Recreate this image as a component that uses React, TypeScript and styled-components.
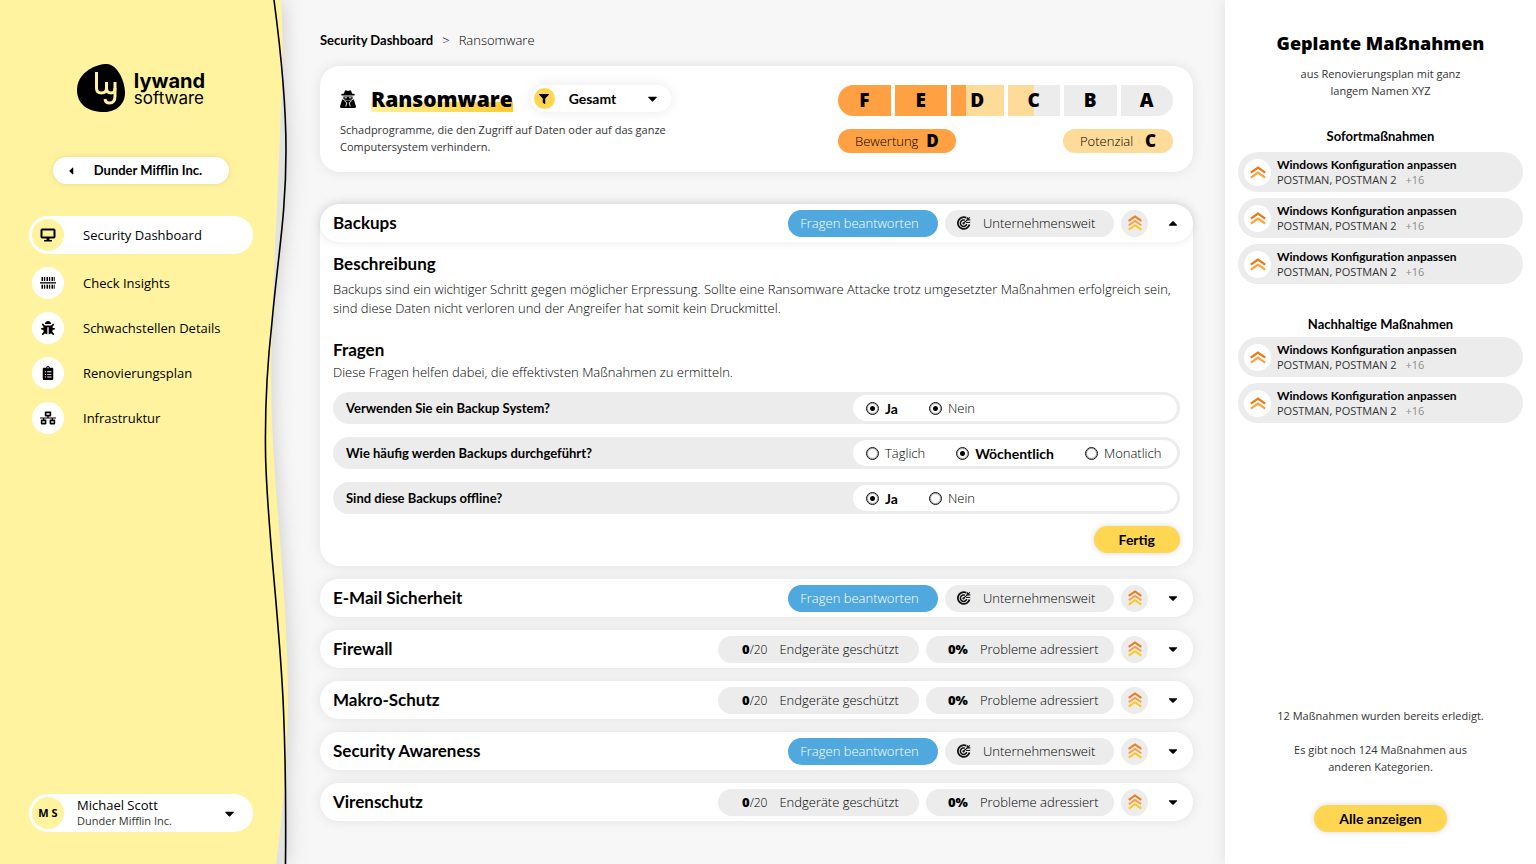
import React, { useId, useState } from 'react';
import styled, { createGlobalStyle, css } from 'styled-components';
import {
  FaBug,
  FaCaretDown,
  FaCaretLeft,
  FaCaretUp,
  FaClipboardList,
  FaFilter,
  FaNetworkWired,
} from 'react-icons/fa';

const color = {
  sidebar: '#fff3a0',
  yellow: '#ffd651',
  page: '#f7f7f7',
  grey: '#ececec',
  blue: '#4fa8de',
  orange: '#ffa143',
  peach: '#ffdb99',
  text: '#000',
  soft: '#333',
  muted: '#8c8c8c',
};

const boldFont = "Lato, 'Open Sans', sans-serif";
const textFont = "'Open Sans', 'Noto Sans', sans-serif";

const GlobalStyle = createGlobalStyle`
  *, *::before, *::after { box-sizing: border-box; }
  body {
    margin: 0;
    background: ${color.page};
    color: ${color.text};
    font: 300 13px/19px ${textFont};
  }
  h1, h2, h3, h4, p, ul, ol, fieldset { margin: 0; padding: 0; border: 0; list-style: none; }
  button, select { font: inherit; color: inherit; border: 0; margin: 0; padding: 0; background: none; cursor: pointer; }
  a { color: inherit; text-decoration: none; }
  svg { display: block; flex: none; }
`;

const bold = css`
  font-family: ${boldFont};
  font-weight: 700;
  font-size: 14px;
  color: #000;
`;

const label = css`
  ${bold}
  font-size: 13px;
`;

const small = css`
  font-size: 11px;
  font-weight: 400;
  line-height: 17px;
  color: ${color.soft};
`;

const softShadow = css`
  box-shadow: 0 0 13px rgba(0, 0, 0, 0.09);
`;

const Page = styled.div`
  display: grid;
  grid-template-columns: 288px minmax(0, 1fr) 311px;
  min-height: 100vh;
`;

/* ---------- Sidebar ---------- */

const Sidebar = styled.aside`
  position: relative;
  display: flex;
  flex-direction: column;
  padding: 64px 35px 32px 29px;
`;

const Wave = styled.svg`
  position: absolute;
  inset: 0 auto 0 0;
  width: 320px;
  height: 100%;
  pointer-events: none;
`;

const WaveShadow = styled.g`
  filter: drop-shadow(2px 0 10px rgba(0, 0, 0, 0.16));
`;

const Logo = styled.a`
  position: relative;
  display: flex;
  align-self: center;
  align-items: center;
  gap: 9px;
`;

const LogoText = styled.span`
  display: grid;
  padding-top: 4px;
  font: 400 17px/17px Inter, sans-serif;
  color: #000;

  b {
    font-size: 20px;
    font-weight: 700;
    line-height: 17px;
  }
`;

const CompanyButton = styled.button`
  ${label}
  position: relative;
  display: flex;
  align-self: center;
  align-items: center;
  gap: 17px;
  height: 27px;
  margin-top: 45px;
  padding: 0 27px 0 12px;
  border-radius: 14px;
  background: #fff;
  box-shadow: 0 0 6px rgba(0, 0, 0, 0.1);
`;

const Nav = styled.nav`
  position: relative;
  display: grid;
  gap: 13px;
  margin-top: 32px;
`;

const NavLink = styled.a<{ $active?: boolean }>`
  display: flex;
  align-items: center;
  gap: 19px;
  padding: ${(p) => (p.$active ? '3px' : '0 3px')};
  border-radius: 19px;
  background: ${(p) => (p.$active ? '#fff' : 'transparent')};
  font-weight: 400;
  color: #000;
`;

const Disc = styled.span<{ $bg: string; $size?: number }>`
  display: grid;
  place-items: center;
  flex: none;
  width: ${(p) => p.$size ?? 32}px;
  height: ${(p) => p.$size ?? 32}px;
  border-radius: 50%;
  background: ${(p) => p.$bg};
  color: #000;
`;

const Initials = styled(Disc)`
  font: 700 11px/16px ${textFont};
`;

const UserButton = styled.button`
  position: relative;
  display: flex;
  align-items: center;
  gap: 13px;
  margin-top: auto;
  padding: 3px 16px 3px 3px;
  border-radius: 19px;
  background: #fff;
  text-align: left;
`;

const UserText = styled.span`
  display: grid;
  flex: 1;
  ${small}
  line-height: 15px;

  strong {
    font-size: 13px;
    font-weight: 400;
    color: #000;
  }
`;

/* ---------- Main column ---------- */

const Main = styled.main`
  position: relative;
  padding: 30px 32px;
`;

const Breadcrumb = styled.nav`
  display: flex;
  gap: 9px;
  line-height: 20px;

  a {
    ${label}
  }
`;

const Summary = styled.section`
  ${softShadow}
  display: flex;
  justify-content: space-between;
  gap: 32px;
  margin-top: 16px;
  padding: 19px 20px 17px;
  border-radius: 20px;
  background: #fff;
`;

const SummaryText = styled.div`
  display: grid;
  gap: 9px;
  width: 350px;

  p {
    ${small}
  }
`;

const TitleRow = styled.div`
  display: flex;
  align-items: center;
  height: 27px;
`;

const Title = styled.h1`
  margin: 0 18px 0 15px;
  font: 800 21px/26px ${textFont};
  color: #000;
  background: linear-gradient(90deg, #fff09a, #ffcb2e) 0 100% / 100% 10px no-repeat;
`;

const Filter = styled.label`
  ${softShadow}
  display: flex;
  align-items: center;
  flex: none;
  width: 140px;
  height: 27px;
  padding: 0 11px 0 3px;
  border-radius: 14px;
`;

const FilterSelect = styled.select`
  ${bold}
  flex: 1;
  height: 27px;
  padding-left: 14px;
  appearance: none;
  outline: none;
`;

const Rating = styled.div`
  display: grid;
  align-content: start;
  gap: 13px;
  width: 335px;
`;

const Scale = styled.ol`
  display: grid;
  grid-template-columns: repeat(6, 1fr);
  gap: 4px;
  overflow: hidden;
  border-radius: 16px;
`;

const Grade = styled.li<{ $from: string; $to: string; $split: number }>`
  height: 31px;
  background: linear-gradient(
    90deg,
    ${(p) => p.$from} ${(p) => p.$split}%,
    ${(p) => p.$to} ${(p) => p.$split}%
  );
  font: 800 19px/31px ${textFont};
  text-align: center;
  color: #000;
`;

const Badges = styled.div`
  display: flex;
  justify-content: space-between;
`;

const Badge = styled.span<{ $bg: string }>`
  display: flex;
  align-items: center;
  justify-content: space-between;
  gap: 8px;
  min-width: 110px;
  height: 24px;
  padding: 0 17px;
  border-radius: 12px;
  background: ${(p) => p.$bg};

  b {
    font: 800 17px/24px ${textFont};
    color: #000;
  }
`;

const Topics = styled.div`
  display: grid;
  gap: 13px;
  margin-top: 32px;
`;

const Topic = styled.section`
  ${softShadow}
  border-radius: 20px;
  background: #fff;
`;

const TopicHead = styled.header<{ $open: boolean }>`
  display: flex;
  align-items: center;
  gap: 7px;
  height: 38px;
  padding: 0 11px 0 13px;
  border-radius: 19px;
  box-shadow: ${(p) => (p.$open ? '0 0 10px rgba(0, 0, 0, 0.1)' : 'none')};
`;

const Heading = styled.h2`
  ${bold}
  flex: 1;
  font-size: 17px;
  line-height: 20px;
`;

const SubHeading = styled(Heading).attrs({ as: 'h3' })``;

const Chip = styled.span<{ $width: number; $left: number }>`
  display: flex;
  align-items: center;
  gap: 12px;
  min-width: ${(p) => p.$width}px;
  height: 27px;
  padding: 0 12px 0 ${(p) => p.$left}px;
  border-radius: 14px;
  background: ${color.grey};
  white-space: nowrap;

  b {
    font-weight: 800;
    font-size: 13px;
  }

  small {
    font-size: 12px;
  }
`;

const AnswerButton = styled.button`
  width: 150px;
  height: 27px;
  padding-right: 7px;
  border-radius: 14px;
  background: ${color.blue};
  color: #fff;
`;

const Toggle = styled.button`
  display: grid;
  place-items: center;
  width: 18px;
  height: 27px;
  margin-left: 9px;
  color: #000;
`;

const TopicBody = styled.div`
  padding: 12px 13px 13px;
`;

const Description = styled.p`
  margin: 6px 0 22px;
`;

const Hint = styled.p`
  margin-top: 3px;
`;

const Questions = styled.div`
  display: grid;
  gap: 13px;
  margin: 10px 0 12px;
`;

const Question = styled.fieldset`
  display: flex;
  align-items: center;
  justify-content: space-between;
  height: 32px;
  padding: 3px;
  border-radius: 16px;
  background: ${color.grey};
`;

const QuestionText = styled.span`
  ${label}
  padding-left: 10px;
`;

const Options = styled.div`
  display: flex;
  align-items: center;
  gap: 31px;
  width: 324px;
  height: 26px;
  padding: 0 13px;
  border-radius: 13px;
  background: #fff;
`;

const Option = styled.label<{ $strong?: boolean }>`
  display: flex;
  align-items: center;
  gap: 6px;
  ${(p) => p.$strong && bold}
`;

const Radio = styled.input`
  appearance: none;
  width: 13px;
  height: 13px;
  margin: 0;
  border: 1px solid #111;
  outline: 1px solid rgba(17, 17, 17, 0.4);
  outline-offset: -2px;
  border-radius: 50%;

  &:checked {
    background: radial-gradient(circle, #000 0 2px, transparent 3px);
  }
`;

const Action = styled.button`
  ${bold}
  height: 27px;
  padding: 0 25px;
  border-radius: 14px;
  background: ${color.yellow};
  box-shadow: 0 0 6px rgba(0, 0, 0, 0.16);
`;

const ActionRow = styled.div`
  display: flex;
  justify-content: flex-end;
`;

/* ---------- Planned measures ---------- */

const Panel = styled.aside`
  position: relative;
  display: flex;
  flex-direction: column;
  padding: 30px 13px 32px;
  background: #fff;
  box-shadow: 0 0 13px rgba(0, 0, 0, 0.1);
  text-align: center;
`;

const PanelTitle = styled.h2`
  font: 800 18px/26px ${textFont};
  color: #000;
`;

const PanelNote = styled.p`
  ${small}
  width: 190px;
  margin: 9px auto 0;
`;

const PanelHeading = styled.h3`
  ${label}
  line-height: 20px;
  margin: 30px 0 3px;

  &:first-of-type {
    margin: 27px 0 6px;
  }
`;

const Measures = styled.ul`
  display: grid;
  gap: 6px;
`;

const Measure = styled.li`
  display: flex;
  align-items: center;
  gap: 6px;
  height: 40px;
  padding: 0 6px;
  border-radius: 20px;
  background: ${color.grey};
  text-align: left;
  ${small}
  line-height: 15px;

  strong {
    ${bold}
    display: block;
    font-size: 12px;
  }

  small {
    margin-left: 6px;
    font-size: 11px;
    color: ${color.muted};
  }
`;

const PanelFoot = styled.footer`
  ${small}
  display: grid;
  justify-items: center;
  gap: 17px;
  margin-top: auto;

  p {
    max-width: 210px;
  }

  button {
    margin-top: 13px;
  }
`;

/* ---------- Drawings ---------- */

function SidebarWave() {
  const line =
    'M274 0C278 30 286 90 286 150C286 215 278 255 272 322C266 375 265 410 265.500 450C266 520 280 620 283.500 710C286 770 286 810 285.500 864';
  return (
    <Wave viewBox="0 0 320 864" preserveAspectRatio="none" aria-hidden="true">
      <WaveShadow>
        <path d={`${line}H0V0Z`} fill="#e2e2e2" />
        <path
          d="M0 0H281C284 40 282 90 280 130C278 190 275 240 273 300C270 370 271 410 273.500 450C277 520 287 600 288 690C288 760 282 820 276 864H0Z"
          fill={color.sidebar}
        />
      </WaveShadow>
      <path d={line} fill="none" stroke="#000" strokeWidth="1.6" vectorEffect="non-scaling-stroke" />
    </Wave>
  );
}

function LogoMark() {
  return (
    <svg width="48" height="48" viewBox="0 0 48 48" aria-hidden="true">
      <path d="M28 0C40-1 48 17 48 29C48 41 38 48 27 48C12 48 0 41 0 26C0 10 16 1 28 0Z" fill="#000" />
      <g fill="none" stroke={color.sidebar} strokeWidth="3">
        <path d="M19.500 8V24Q19.500 29 24.500 29Q29.500 29 29.500 24V18" />
        <path d="M29.500 24Q29.500 29 34 29Q38 29 38 24" />
        <path d="M38 18V32Q38 39 32.500 39Q28.500 39 28 35" />
      </g>
    </svg>
  );
}

function MonitorIcon() {
  return (
    <svg width="16" height="14" viewBox="0 0 16 14" aria-hidden="true">
      <rect x="1.500" y="1.500" width="13" height="8" rx="0.800" fill="none" stroke="#000" strokeWidth="2" />
      <path d="M6.500 10H9.500V12.500H6.500Z" />
      <rect x="4" y="12" width="8" height="1.500" rx="0.600" />
    </svg>
  );
}

function ScanIcon() {
  const bars = [2.5, 5, 7.5, 10, 12.5];
  return (
    <svg width="16" height="14" viewBox="0 0 16 14" aria-hidden="true">
      <rect y="6.200" width="16" height="1.300" />
      {bars.map((x, i) => (
        <React.Fragment key={x}>
          <rect x={x - 1} y="1" width={i % 2 ? 1.2 : 1.6} height="4" />
          <rect x={x - 1} y="8.700" width={i % 2 ? 1.2 : 1.6} height="4" />
        </React.Fragment>
      ))}
      <rect x="13.800" y="1" width="0.900" height="4" />
      <rect x="13.800" y="8.700" width="0.900" height="4" />
    </svg>
  );
}

function SpyIcon() {
  return (
    <svg width="16" height="18" viewBox="0 0 16 18" aria-hidden="true">
      <path d="M3.800 4L4.800 1Q5.400 0 6.500 0.500L8 1.100L9.500 0.500Q10.600 0 11.200 1L12.200 4Z" />
      <rect x="1.300" y="3.700" width="13.400" height="1.900" rx="0.900" />
      <path d="M3.400 6.600H12.600V8.500Q12 10.200 8 10.200Q4 10.200 3.400 8.500Z" />
      <path d="M2.200 9.300L5 10.500H11L13.800 9.300L14.600 12L16 16.500Q16 18 14.700 18H1.300Q0 18 0 16.500L1.400 12Z" />
      <path
        d="M4.400 10.800L6.800 12.800L5.800 16.500M11.600 10.800L9.200 12.800L10.200 16.500M4.500 7.800H7M9 7.800H11.500"
        fill="none"
        stroke="#fff"
        strokeWidth="0.900"
      />
    </svg>
  );
}

function TargetIcon() {
  return (
    <svg width="14" height="14" viewBox="0 0 14 14" fill="none" stroke="#111" strokeWidth="1.800" aria-hidden="true">
      <path d="M9.200 1.600A5.900 5.900 0 1 0 12.500 8.600" />
      <path d="M7.800 4.200A3.200 3.200 0 1 0 9.700 8" strokeWidth="1.500" />
      <path d="M6.500 7.400L12.800 1.400M10.300 3.800V1.200M10.300 3.800H13.300" strokeWidth="1.300" />
      <path d="M9 6.400H13.200" strokeWidth="1" />
      <circle cx="6.500" cy="7.400" r="1.100" fill="#111" stroke="none" />
    </svg>
  );
}

function Chevrons({ colors, size }: { colors: string[]; size: number }) {
  const step = 5;
  const height = step * (colors.length - 1) + 8;
  return (
    <svg width={size} height={height} viewBox={`0 0 16 ${height}`} fill="none" strokeWidth="2.300" aria-hidden="true">
      {colors.map((c, i) => (
        <path key={c} d={`M0.800 ${6.6 + i * step}L8 ${1.6 + i * step}L15.200 ${6.6 + i * step}`} stroke={c} />
      ))}
    </svg>
  );
}

/* ---------- Sections ---------- */

const navItems = [
  { label: 'Security Dashboard', icon: <MonitorIcon />, active: true },
  { label: 'Check Insights', icon: <ScanIcon /> },
  { label: 'Schwachstellen Details', icon: <FaBug size={14} /> },
  { label: 'Renovierungsplan', icon: <FaClipboardList size={14} /> },
  { label: 'Infrastruktur', icon: <FaNetworkWired size={16} /> },
];

const grades = [
  { letter: 'F', from: color.orange, to: color.orange, split: 100 },
  { letter: 'E', from: color.orange, to: color.orange, split: 100 },
  { letter: 'D', from: color.orange, to: color.peach, split: 28 },
  { letter: 'C', from: color.peach, to: color.grey, split: 50 },
  { letter: 'B', from: color.grey, to: color.grey, split: 100 },
  { letter: 'A', from: color.grey, to: color.grey, split: 100 },
];

const questions = [
  {
    text: 'Verwenden Sie ein Backup System?',
    options: [
      { label: 'Ja', group: 'system-ja', checked: true, strong: true },
      { label: 'Nein', group: 'system-nein', checked: true },
    ],
  },
  {
    text: 'Wie häufig werden Backups durchgeführt?',
    options: [
      { label: 'Täglich', group: 'interval' },
      { label: 'Wöchentlich', group: 'interval', checked: true, strong: true },
      { label: 'Monatlich', group: 'interval' },
    ],
  },
  {
    text: 'Sind diese Backups offline?',
    options: [
      { label: 'Ja', group: 'offline', checked: true, strong: true },
      { label: 'Nein', group: 'offline' },
    ],
  },
];

const topics = [
  { title: 'Backups', kind: 'questions' },
  { title: 'E-Mail Sicherheit', kind: 'questions' },
  { title: 'Firewall', kind: 'devices' },
  { title: 'Makro-Schutz', kind: 'devices' },
  { title: 'Security Awareness', kind: 'questions' },
  { title: 'Virenschutz', kind: 'devices' },
];

function BackupDetails() {
  return (
    <TopicBody>
      <SubHeading>Beschreibung</SubHeading>
      <Description>
        Backups sind ein wichtiger Schritt gegen möglicher Erpressung. Sollte eine Ransomware Attacke trotz
        umgesetzter Maßnahmen erfolgreich sein, sind diese Daten nicht verloren und der Angreifer hat somit kein
        Druckmittel.
      </Description>
      <SubHeading>Fragen</SubHeading>
      <Hint>Diese Fragen helfen dabei, die effektivsten Maßnahmen zu ermitteln.</Hint>
      <Questions>
        {questions.map((q) => (
          <Question key={q.text} aria-label={q.text}>
            <QuestionText>{q.text}</QuestionText>
            <Options>
              {q.options.map((o) => (
                <Option key={o.label} $strong={o.strong}>
                  <Radio type="radio" name={o.group} defaultChecked={o.checked} />
                  {o.label}
                </Option>
              ))}
            </Options>
          </Question>
        ))}
      </Questions>
      <ActionRow>
        <Action type="button">Fertig</Action>
      </ActionRow>
    </TopicBody>
  );
}

function TopicCard({ title, kind, initiallyOpen }: { title: string; kind: string; initiallyOpen: boolean }) {
  const [open, setOpen] = useState(initiallyOpen);
  return (
    <Topic>
      <TopicHead $open={open}>
        <Heading>{title}</Heading>
        {kind === 'questions' ? (
          <>
            <AnswerButton type="button">Fragen beantworten</AnswerButton>
            <Chip $width={169} $left={12}>
              <TargetIcon />
              Unternehmensweit
            </Chip>
          </>
        ) : (
          <>
            <Chip $width={201} $left={24}>
              <span>
                <b>0</b>
                <small>/20</small>
              </span>
              Endgeräte geschützt
            </Chip>
            <Chip $width={188} $left={22}>
              <b>0%</b>
              Probleme adressiert
            </Chip>
          </>
        )}
        <Disc $bg={color.grey} $size={27}>
          <Chevrons size={14} colors={['#ee7b1c', '#ff9f40', '#ffc81e']} />
        </Disc>
        <Toggle type="button" aria-expanded={open} aria-label={title} onClick={() => setOpen(!open)}>
          {open ? <FaCaretUp size={14} /> : <FaCaretDown size={14} />}
        </Toggle>
      </TopicHead>
      {open && title === 'Backups' && <BackupDetails />}
    </Topic>
  );
}

function MeasureList({ count }: { count: number }) {
  return (
    <Measures>
      {Array.from({ length: count }, (_, i) => (
        <Measure key={i}>
          <Disc $bg="#fff" $size={27}>
            <Chevrons size={16} colors={['#f0760f', '#ffa23c']} />
          </Disc>
          <div>
            <strong>Windows Konfiguration anpassen</strong>
            POSTMAN, POSTMAN 2 <small>+16</small>
          </div>
        </Measure>
      ))}
    </Measures>
  );
}

export default function App() {
  const filterId = useId();
  return (
    <>
      <GlobalStyle />
      <Page>
        <Sidebar>
          <SidebarWave />
          <Logo href="#">
            <LogoMark />
            <LogoText>
              <b>lywand</b>
              software
            </LogoText>
          </Logo>
          <CompanyButton type="button">
            <FaCaretLeft size={12} />
            Dunder Mifflin Inc.
          </CompanyButton>
          <Nav>
            {navItems.map((item) => (
              <NavLink key={item.label} href="#" $active={item.active}>
                <Disc $bg={item.active ? color.sidebar : '#fff'}>{item.icon}</Disc>
                {item.label}
              </NavLink>
            ))}
          </Nav>
          <UserButton type="button">
            <Initials $bg={color.sidebar}>M S</Initials>
            <UserText>
              <strong>Michael Scott</strong>
              Dunder Mifflin Inc.
            </UserText>
            <FaCaretDown size={15} />
          </UserButton>
        </Sidebar>

        <Main>
          <Breadcrumb>
            <a href="#">Security Dashboard</a>
            <span>&gt;</span>
            <span>Ransomware</span>
          </Breadcrumb>

          <Summary>
            <SummaryText>
              <TitleRow>
                <SpyIcon />
                <Title>Ransomware</Title>
                <Filter htmlFor={filterId}>
                  <Disc $bg={color.yellow} $size={21}>
                    <FaFilter size={10} />
                  </Disc>
                  <FilterSelect id={filterId} aria-label="Filter">
                    <option>Gesamt</option>
                  </FilterSelect>
                  <FaCaretDown size={15} />
                </Filter>
              </TitleRow>
              <p>Schadprogramme, die den Zugriff auf Daten oder auf das ganze Computersystem verhindern.</p>
            </SummaryText>
            <Rating>
              <Scale>
                {grades.map((g) => (
                  <Grade key={g.letter} $from={g.from} $to={g.to} $split={g.split}>
                    {g.letter}
                  </Grade>
                ))}
              </Scale>
              <Badges>
                <Badge $bg={color.orange}>
                  Bewertung <b>D</b>
                </Badge>
                <Badge $bg={color.peach}>
                  Potenzial <b>C</b>
                </Badge>
              </Badges>
            </Rating>
          </Summary>

          <Topics>
            {topics.map((t, i) => (
              <TopicCard key={t.title} title={t.title} kind={t.kind} initiallyOpen={i === 0} />
            ))}
          </Topics>
        </Main>

        <Panel>
          <PanelTitle>Geplante Maßnahmen</PanelTitle>
          <PanelNote>aus Renovierungsplan mit ganz langem Namen XYZ</PanelNote>
          <PanelHeading>Sofortmaßnahmen</PanelHeading>
          <MeasureList count={3} />
          <PanelHeading>Nachhaltige Maßnahmen</PanelHeading>
          <MeasureList count={2} />
          <PanelFoot>
            <p>12 Maßnahmen wurden bereits erledigt.</p>
            <p>Es gibt noch 124 Maßnahmen aus anderen Kategorien.</p>
            <Action type="button">Alle anzeigen</Action>
          </PanelFoot>
        </Panel>
      </Page>
    </>
  );
}
